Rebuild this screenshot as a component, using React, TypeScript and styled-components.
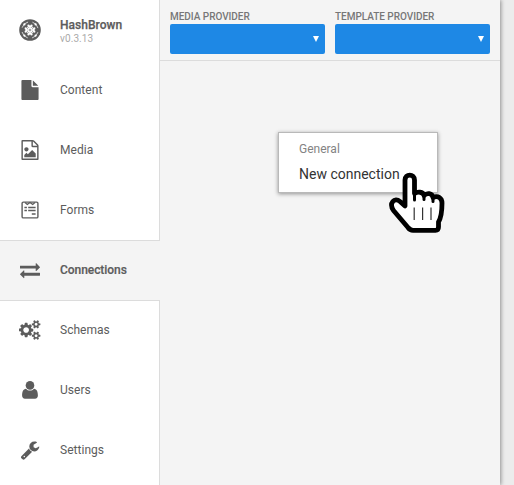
import React from 'react';
import styled, { createGlobalStyle, css } from 'styled-components';

const GlobalStyle = createGlobalStyle`
  *, *::before, *::after { box-sizing: border-box; }
  html, body { margin: 0; height: 100%; overflow: hidden; }
  body { background: #ececec; font-family: Roboto, "Liberation Sans", sans-serif; color: #5c5c5c; }
`;

const Page = styled.div`
  display: flex;
  width: 514px;
  height: 485px;
`;

const Sidebar = styled.nav`
  display: flex;
  flex-direction: column;
  flex: 0 0 160px;
  position: relative;
  z-index: 1;
  background: #f4f4f4;
`;

const SidebarRest = styled.div`
  flex: 1;
  background: #fff;
  border-right: 1px solid #dcdcdc;
`;

const Item = styled.a<{ $active?: boolean }>`
  display: flex;
  align-items: center;
  flex: 0 0 60px;
  padding-left: 19px;
  font-size: 12px;
  line-height: 16px;
  letter-spacing: 0.03px;
  color: #5c5c5c;
  background: #fff;
  border-right: 1px solid #dcdcdc;
  ${p => p.$active && css`
    flex-basis: 61px;
    margin-bottom: -1px;
    padding-bottom: 1px;
    background: #f4f4f4;
    border: solid #dcdcdc;
    border-width: 1px 0;
    font-weight: 500;
    letter-spacing: -0.06px;
    -webkit-text-stroke: 0.2px;
    z-index: 1;
  `}
`;

const IconBox = styled.span`
  display: flex;
  justify-content: center;
  flex: 0 0 22px;
  margin-right: 19px;
`;

const Brand = styled.div`
  display: flex;
  flex-direction: column;
  padding-top: 2px;
`;

const BrandName = styled.strong`
  font-size: 12px;
  line-height: 14px;
  font-weight: 500;
  -webkit-text-stroke: 0.25px;
`;

const Version = styled.span`
  font-size: 10px;
  line-height: 13px;
  letter-spacing: 0.1px;
  color: #aaa;
`;

const Workspace = styled.main`
  flex: 0 0 339.5px;
  background: #f4f4f4;
  box-shadow: 1px 0 4px rgba(0, 0, 0, 0.4);
`;

const Toolbar = styled.header`
  display: grid;
  grid-template-columns: 155px 155px;
  column-gap: 10px;
  height: 61px;
  padding: 10px 0 0 10px;
  border-bottom: 1px solid #dcdcdc;
`;

const FieldLabel = styled.div`
  height: 14px;
  font-size: 10px;
  line-height: 13px;
  font-weight: 500;
  letter-spacing: -0.03px;
  color: #777;
  white-space: nowrap;
`;

const Dropdown = styled.div`
  display: flex;
  align-items: center;
  justify-content: flex-end;
  height: 30px;
  padding-right: 6px;
  border-radius: 2px;
  background: #1e88e5;
`;

const ContextMenu = styled.div`
  position: absolute;
  left: 278px;
  top: 132px;
  z-index: 2;
  width: 160px;
  height: 61px;
  padding: 9px 20px 0;
  background: #fff;
  border: 1px solid #b9b9b9;
  box-shadow: 0 1px 4px rgba(0, 0, 0, 0.4);
  white-space: nowrap;
`;

const MenuHeading = styled.div`
  font-size: 12px;
  line-height: 14px;
  color: #838383;
`;

const MenuOption = styled.div`
  padding-top: 9px;
  font-size: 14px;
  line-height: 18px;
  color: #333;
`;

const Pointer = styled.svg`
  position: absolute;
  left: 380px;
  top: 165px;
  z-index: 3;
`;

const paths = {
  file: 'M1152 512v-472q22 14 36 28l408 408q14 14 28 36h-472zm-128 32q0 40 28 68t68 28h544v1056q0 40-28 68t-68 28h-1344q-40 0-68-28t-28-68v-1600q0-40 28-68t68-28h800v544z',
  image: 'M1596 380q28 28 48 76t20 88v1152q0 40-28 68t-68 28h-1344q-40 0-68-28t-28-68v-1600q0-40 28-68t68-28h896q40 0 88 20t76 48zm-444-244v376h376q-10-29-22-41l-313-313q-12-12-41-22zm384 1528v-1024h-416q-40 0-68-28t-28-68v-416h-768v1536h1280zm-128-448v320h-1024v-192l192-192 128 128 384-384zm-832-192q-80 0-136-56t-56-136 56-136 136-56 136 56 56 136-56 136-136 56z',
  exchange: 'M1792 1184v192q0 13-9.5 22.5t-22.5 9.5h-1376v192q0 13-9.5 22.5t-22.5 9.5q-12 0-24-10l-319-320q-9-9-9-22 0-14 9-23l320-320q9-9 23-9 13 0 22.5 9.5t9.5 22.5v192h1376q13 0 22.5 9.5t9.5 22.5zm0-544q0 14-9 23l-320 320q-9 9-23 9-13 0-22.5-9.5t-9.5-22.5v-192h-1376q-13 0-22.5-9.5t-9.5-22.5v-192q0-13 9.5-22.5t22.5-9.5h1376v-192q0-14 9-23t23-9q12 0 24 10l319 319q9 9 9 23z',
  user: 'M1536 1399q0 109-62.5 187t-150.5 78h-854q-88 0-150.5-78t-62.5-187q0-85 8.500-160.500t31.500-152 58.500-131 94-89 134.500-34.500q131 128 313 128t313-128q76 0 134.500 34.500t94 89 58.500 131 31.500 152 8.500 160.500zm-256-887q0 159-112.500 271.500t-271.500 112.500-271.500-112.500-112.500-271.500 112.500-271.500 271.500-112.500 271.500 112.500 112.500 271.500z',
  wrench: 'M448 1472q0-26-19-45t-45-19-45 19-19 45 19 45 45 19 45-19 19-45zm644-420l-682 682q-37 37-90 37-52 0-91-37l-106-108q-38-36-38-90 0-53 38-91l681-681q39 98 114.5 173.5t173.5 114.5zm634-435q0 39-23 106-47 134-164.5 217.5t-258.5 83.5q-185 0-316.5-131.5t-131.5-316.5 131.5-316.5 316.5-131.5q58 0 121.5 16.5t107.5 46.5q16 11 16 28t-16 28l-293 169v224l193 107q5-3 79-48.5t135.5-81 70.5-35.5q15 0 23.5 10t8.5 25z',
  cogs: 'M896 896q0-106-75-181t-181-75-181 75-75 181 75 181 181 75 181-75 75-181zm768 512q0-52-38-90t-90-38-90 38-38 90q0 53 37.5 90.5t90.5 37.5 90.5-37.5 37.5-90.5zm0-1024q0-52-38-90t-90-38-90 38-38 90q0 53 37.5 90.5t90.5 37.5 90.5-37.5 37.5-90.5zm-384 421v185q0 10-7 19.5t-16 10.5l-155 24q-11 35-32 76 34 48 90 115 7 11 7 20 0 12-7 19-23 30-82.5 89.5t-78.5 59.5q-11 0-21-7l-115-90q-37 19-77 31-11 108-23 155-7 24-30 24h-186q-11 0-20-7.5t-10-17.5l-23-153q-34-10-75-31l-118 89q-7 7-20 7-11 0-21-8-144-133-144-160 0-9 7-19 10-14 41-53t47-61q-23-44-35-82l-152-24q-10-1-17-9.5t-7-19.5v-185q0-10 7-19.5t16-10.5l155-24q11-35 32-76-34-48-90-115-7-11-7-20 0-12 7-20 22-30 82-89t79-59q11 0 21 7l115 90q34-18 77-32 11-108 23-154 7-24 30-24h186q11 0 20 7.5t10 17.5l23 153q34 10 75 31l118-89q8-7 20-7 11 0 21 8 144 133 144 160 0 8-7 19-12 16-42 54t-45 60q23 48 34 82l152 23q10 2 17 10.5t7 19.5zm640 533v140q0 16-149 31-12 27-30 52 51 113 51 138 0 4-4 7-122 71-124 71-8 0-46-47t-52-68q-20 2-30 2t-30-2q-14 21-52 68t-46 47q-2 0-124-71-4-3-4-7 0-25 51-138-18-25-30-52-149-15-149-31v-140q0-16 149-31 13-29 30-52-51-113-51-138 0-4 4-7 4-2 35-20t59-34 30-16q8 0 46 46.5t52 67.5q20-2 30-2t30 2q51-71 92-112l6-2q4 0 124 70 4 3 4 7 0 25-51 138 17 23 30 52 149 15 149 31zm0-1024v140q0 16-149 31-12 27-30 52 51 113 51 138 0 4-4 7-122 71-124 71-8 0-46-47t-52-68q-20 2-30 2t-30-2q-14 21-52 68t-46 47q-2 0-124-71-4-3-4-7 0-25 51-138-18-25-30-52-149-15-149-31v-140q0-16 149-31 13-29 30-52-51-113-51-138 0-4 4-7 4-2 35-20t59-34 30-16q8 0 46 46.5t52 67.5q20-2 30-2t30 2q51-71 92-112l6-2q4 0 124 70 4 3 4 7 0 25-51 138 17 23 30 52 149 15 149 31z',
};

const Glyph = ({ d, box = '0 0 1792 1792', w = 20, h = 20 }: { d: string; box?: string; w?: number; h?: number }) => (
  <svg width={w} height={h} viewBox={box} fill="currentColor"><path d={d} /></svg>
);

const Logo = () => (
  <svg width="22" height="22" viewBox="0 0 22 22">
    <circle cx="11" cy="11" r="10.8" fill="#5c5c5c" />
    <circle cx="11" cy="11" r="8.2" fill="none" stroke="#fff" strokeWidth="1" strokeDasharray="8.4 4.48" strokeDashoffset="-2.24" opacity=".75" />
    <g fill="#fff">
      {[0, 90, 180, 270].map(a => (
        <g key={a} transform={`rotate(${a} 11 11)`}>
          <circle cx="16.6" cy="5.4" r="1.1" />
          <path d="M10.2 10.6V8.500L8.300 7.200 8.600 5.800 10 5.600 11 6.800l1-1.200 1.400.2.300 1.400-1.900 1.300v2.100z" />
          <path d="m11 10 2.200-2.200 1 1L12 11z" />
        </g>
      ))}
    </g>
    <circle cx="11" cy="11" r=".8" fill="#5c5c5c" />
  </svg>
);

const FormIcon = () => (
  <svg width="18" height="18" viewBox="0 0 18 18" fill="none" stroke="#5c5c5c" strokeWidth="1.4">
    <rect x="1.1" y="1.1" width="15.8" height="15.8" rx="1.2" />
    <path d="M4 1.5 6.3 3.5 9 1.5l2.7 2L14 1.5" strokeWidth="1.2" />
    <path d="M3.4 6.5h2.5M7.2 6.5h7.4M3.4 9.5h2.5M7.2 9.5h7.4M10.8 12.9h3.8" strokeWidth="1.5" />
  </svg>
);

const items = [
  { label: 'Content', icon: <Glyph d={paths.file} /> },
  { label: 'Media', icon: <Glyph d={paths.image} /> },
  { label: 'Forms', icon: <FormIcon /> },
  { label: 'Connections', icon: <Glyph d={paths.exchange} />, active: true },
  { label: 'Schemas', icon: <Glyph d={paths.cogs} box="0 0 1920 1792" w={21.4} /> },
  { label: 'Users', icon: <Glyph d={paths.user} box="256 128 1280 1536" w={16} h={18} /> },
  { label: 'Settings', icon: <Glyph d={paths.wrench} /> },
];

// A broader, squarer silhouette for the user entry.
items[5].icon = (
  <svg width="16" height="18" viewBox="0 0 16 18" fill="currentColor">
    <circle cx="8" cy="4.4" r="4.3" />
    <path d="M4 7.700C5 8.900 6.400 9.600 8 9.600s3-.7 4-1.900c2.800.3 3.900 2.900 3.900 6.800 0 1.900-1.100 3.300-2.900 3.300H3C1.200 17.800.1 16.400.1 14.500.1 10.600 1.200 8 4 7.700Z" />
  </svg>
);

const Caret = () => (
  <svg width="6" height="6" viewBox="0 0 6 6"><path d="M0 0h6L3 6z" fill="#fff" /></svg>
);

export default function App() {
  return (
    <>
      <GlobalStyle />
      <Page>
        <Sidebar>
          <Item as="div">
            <IconBox><Logo /></IconBox>
            <Brand>
              <BrandName>HashBrown</BrandName>
              <Version>v0.3.13</Version>
            </Brand>
          </Item>
          {items.map(item => (
            <Item key={item.label} $active={item.active}>
              <IconBox>{item.icon}</IconBox>
              {item.label}
            </Item>
          ))}
          <SidebarRest />
        </Sidebar>
        <Workspace>
          <Toolbar>
            {['MEDIA PROVIDER', 'TEMPLATE PROVIDER'].map(label => (
              <div key={label}>
                <FieldLabel>{label}</FieldLabel>
                <Dropdown><Caret /></Dropdown>
              </div>
            ))}
          </Toolbar>
        </Workspace>
      </Page>
      <ContextMenu>
        <MenuHeading>General</MenuHeading>
        <MenuOption>New connection</MenuOption>
      </ContextMenu>
      <Pointer width="70" height="75" viewBox="0 0 70 75">
        <path
          d="M25 41V15C25 8.500 34.500 8.500 34.500 15V28.500C37.500 26.500 43 26.500 44 30.500C47 27.500 52 28 53 32.500C58 30 62 33 62 38C62 46 61.500 52 58.500 57V62Q58.500 65.300 55.500 65.300H33Q30 65.300 28 62.500L13.500 45.500C8.500 38 14.500 32 20 36.500L25 41Z"
          fill="#fff" stroke="#000" strokeWidth="4.800" strokeLinejoin="round"
        />
        <path d="M34.500 28v7M44 29.500v5M53 31.500v5" stroke="#000" strokeWidth="3" strokeLinecap="round" />
        <path d="M34.200 42.500v12.500M42.600 42.500v12.500M51 42.500v12.500" stroke="#333" strokeWidth="1.200" />
      </Pointer>
    </>
  );
}
